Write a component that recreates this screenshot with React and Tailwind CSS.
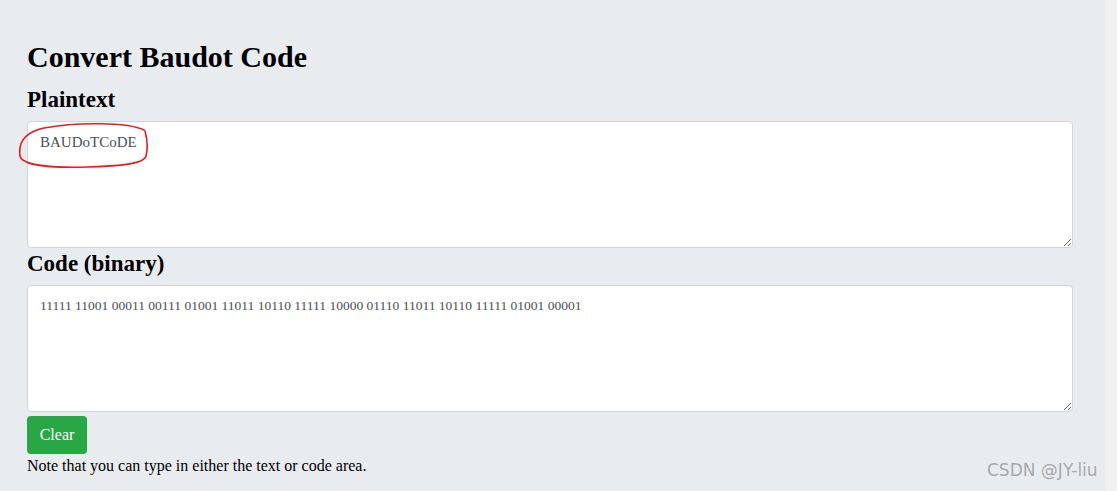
import React from 'react';

export default function App() {
  const code = '11111 11001 00011 00111 01001 11011 10110 11111 10000 01110 11011 10110 11111 01001 00001';
  const serif = { fontFamily: '"Liberation Serif", "DejaVu Serif", serif' };

  return (
    <div className="flex w-[1117px] h-[491px] overflow-hidden relative" style={serif}>
      <div className="w-[1105px] bg-[#e9ecef] pl-[27px] pr-[32px] pt-[39px]">
        <h1 className="text-[30px] leading-[36px] font-bold text-black">Convert Baudot Code</h1>
        <h2 className="text-[23px] leading-[28px] font-bold text-black mt-[11px]">Plaintext</h2>
        <textarea
          defaultValue="BAUDoTCoDE"
          className="block w-full h-[127px] bg-white border border-[#ced4da] rounded-[4px] px-[12px] py-[9px] text-[15px] leading-[22px] text-[#495057] outline-none mt-[7px]"
          style={serif}
        />
        <h2 className="text-[23px] leading-[28px] font-bold text-black mt-[2px]">Code (binary)</h2>
        <textarea
          defaultValue={code}
          className="block w-full h-[127px] bg-white border border-[#ced4da] rounded-[4px] px-[12px] py-[9px] text-[13.5px] leading-[22px] text-[#495057] outline-none mt-[7px]"
          style={serif}
        />
        <button className="mt-[4px] h-[38px] w-[60px] bg-[#28a745] text-white text-[16px] rounded-[4px]">
          Clear
        </button>
        <p className="mt-[2px] text-[16px] leading-[20px] text-black">
          Note that you can type in either the text or code area.
        </p>
      </div>
      <div className="flex-1 bg-[#f0f0f0]" />

      {/* hand-drawn annotation */}
      <svg className="absolute left-[16px] top-[120px]" width="136" height="52" viewBox="0 0 136 52" fill="none">
        <path
          d="M128 10 C 112 2, 60 2, 28 8 C 10 12, 2 22, 4 36 C 6 46, 40 48, 72 47 C 104 46, 128 44, 130 36 C 132 28, 131 18, 129 11"
          stroke="#e02020"
          strokeWidth="1.6"
          strokeLinecap="round"
        />
      </svg>

      <div
        className="absolute left-[987px] top-[459px] text-[17px] leading-[22px] text-[#a9a9a9]"
        style={{ fontFamily: '"DejaVu Sans", "Noto Sans", sans-serif' }}
      >
        CSDN @JY-liu
      </div>
    </div>
  );
}
